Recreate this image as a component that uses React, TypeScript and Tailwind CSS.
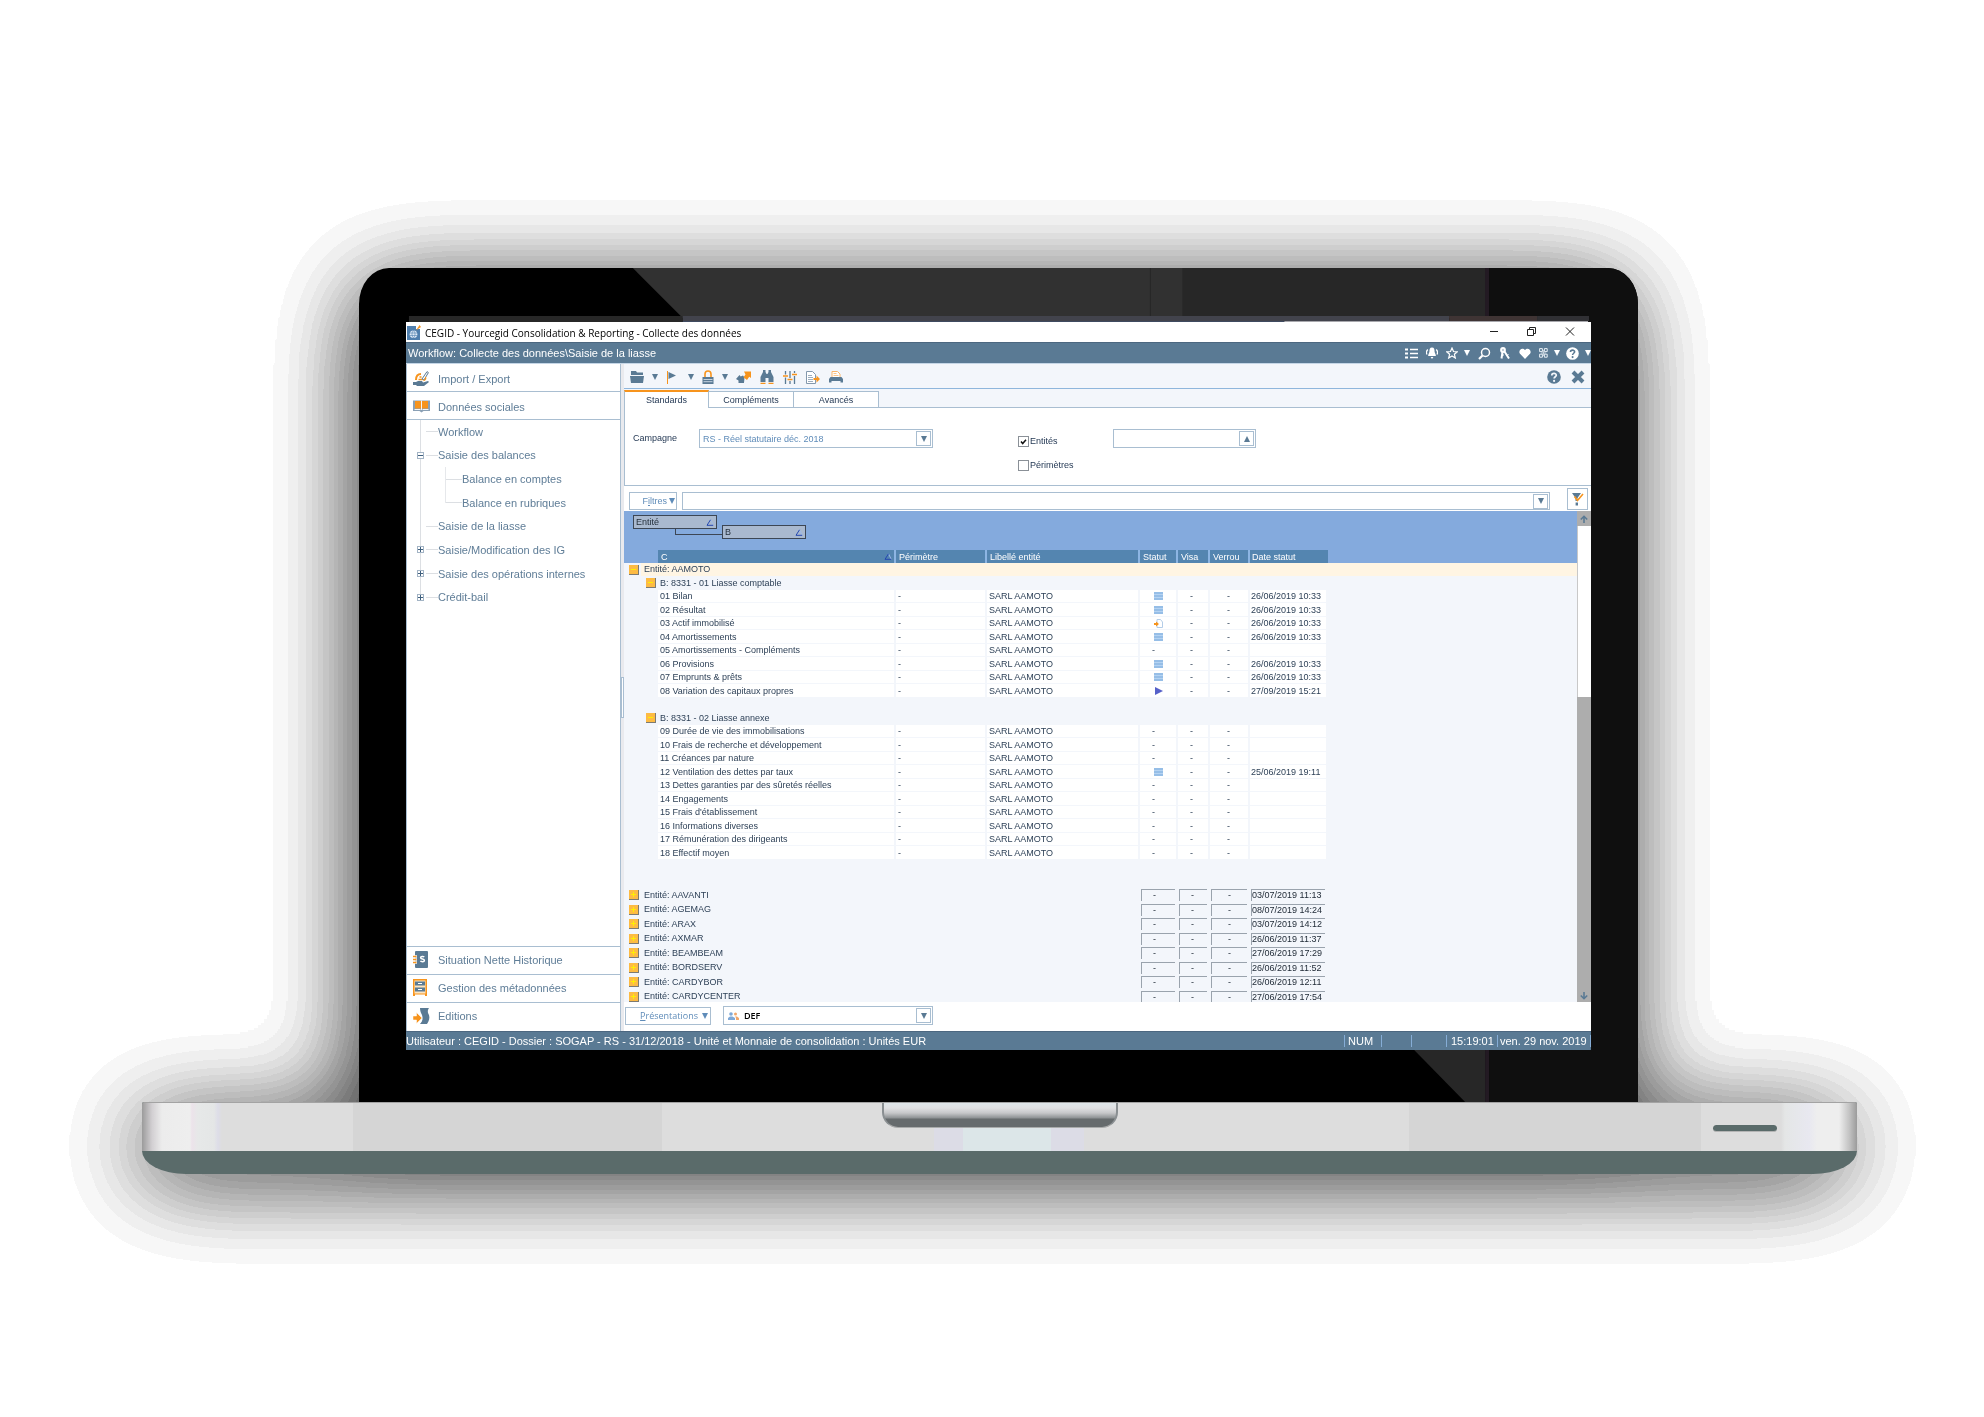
import React, { useState } from "react";
import clsx from "clsx";

type Statut = "list" | "import" | "play" | "none";

type Line = {
  label: string;
  statut: Statut;
  date?: string;
};

const LIASSE_COMPTABLE: Line[] = [
  { label: "01 Bilan", statut: "list", date: "26/06/2019 10:33" },
  { label: "02 Résultat", statut: "list", date: "26/06/2019 10:33" },
  { label: "03 Actif immobilisé", statut: "import", date: "26/06/2019 10:33" },
  { label: "04 Amortissements", statut: "list", date: "26/06/2019 10:33" },
  { label: "05 Amortissements - Compléments", statut: "none" },
  { label: "06 Provisions", statut: "list", date: "26/06/2019 10:33" },
  { label: "07 Emprunts & prêts", statut: "list", date: "26/06/2019 10:33" },
  {
    label: "08 Variation des capitaux propres",
    statut: "play",
    date: "27/09/2019 15:21",
  },
];

const LIASSE_ANNEXE: Line[] = [
  { label: "09 Durée de vie des immobilisations", statut: "none" },
  { label: "10 Frais de recherche et développement", statut: "none" },
  { label: "11 Créances par nature", statut: "none" },
  {
    label: "12 Ventilation des dettes par taux",
    statut: "list",
    date: "25/06/2019 19:11",
  },
  { label: "13 Dettes garanties par des sûretés réelles", statut: "none" },
  { label: "14 Engagements", statut: "none" },
  { label: "15 Frais d'établissement", statut: "none" },
  { label: "16 Informations diverses", statut: "none" },
  { label: "17 Rémunération des dirigeants", statut: "none" },
  { label: "18 Effectif moyen", statut: "none" },
];

const ENTITES = [
  { name: "AAVANTI", date: "03/07/2019 11:13" },
  { name: "AGEMAG", date: "08/07/2019 14:24" },
  { name: "ARAX", date: "03/07/2019 14:12" },
  { name: "AXMAR", date: "26/06/2019 11:37" },
  { name: "BEAMBEAM", date: "27/06/2019 17:29" },
  { name: "BORDSERV", date: "26/06/2019 11:52" },
  { name: "CARDYBOR", date: "26/06/2019 12:11" },
  { name: "CARDYCENTER", date: "27/06/2019 17:54" },
];

type TreeItem = {
  label: string;
  level: 0 | 1;
  state?: "open" | "closed";
  last?: boolean;
};

const TREE: TreeItem[] = [
  { label: "Workflow", level: 0 },
  { label: "Saisie des balances", level: 0, state: "open" },
  { label: "Balance en comptes", level: 1 },
  { label: "Balance en rubriques", level: 1, last: true },
  { label: "Saisie de la liasse", level: 0 },
  { label: "Saisie/Modification des IG", level: 0, state: "closed" },
  { label: "Saisie des opérations internes", level: 0, state: "closed" },
  { label: "Crédit-bail", level: 0, state: "closed", last: true },
];

const SLATE = "#5a7a94";
const ORANGE = "#f7941d";

/* ---------- icons ---------- */

function Caret({ up = false }: { up?: boolean }) {
  return (
    <svg viewBox="0 0 6 6" className="w-1.5 h-1.5 shrink-0" fill="currentColor">
      <path d={up ? "M0 6 3 0l3 6z" : "M0 0h6L3 6z"} />
    </svg>
  );
}

function SortMark() {
  return (
    <svg viewBox="0 0 8 7" className="w-2 h-[7px] shrink-0" fill="none">
      <path d="M4.500 .8 7.200 6.200" stroke="#9db9ea" />
      <path d="M7.200 6.300H1L4.500 .8" stroke="#2347b0" />
    </svg>
  );
}

function AppLogo() {
  return (
    <svg viewBox="0 0 14 15" className="w-3.5 h-[15px] ml-px">
      <path d="M0 1h9v3h4v11H0z" fill="#4f7fae" />
      <circle cx="6.500" cy="9.200" r="3.800" fill="#dfeaf6" />
      <path
        d="M3 8h7M3 10.500h7M6.500 5.500c-2 2-2 5.400 0 7.400M6.500 5.500c2 2 2 5.400 0 7.400"
        stroke="#4f7fae"
        strokeWidth=".6"
        fill="none"
      />
      <path d="M9 5.500 12.500 0 14 2z" fill={ORANGE} />
    </svg>
  );
}

function ImportExportIcon() {
  return (
    <svg viewBox="0 0 16 16" className="w-4 h-4" fill="none">
      <path d="M0 11h3l2-1h4l1 1.400L15 10l1 1-5 4H4l-1-1H0z" fill={SLATE} />
      <path d="M3 9c0-4 2-6 5-6" stroke={ORANGE} strokeWidth="2" />
      <path d="M5.500 8.500h4M6.500 6h2" stroke={ORANGE} strokeWidth="1.500" />
      <path d="M9 8 14 .6l1.400 1L11 9z" stroke={SLATE} fill="#fff" />
      <path d="M12.500 6c.6 1.500 0 3-2 3.500" stroke={ORANGE} strokeWidth="1.300" />
    </svg>
  );
}

function BookIcon() {
  return (
    <svg viewBox="0 0 17 13" className="w-[17px] h-[13px]">
      <path d="M0 .5h17v10.500h-6.500L8.500 12.500 6.500 11H0z" fill="#8aa0b5" />
      <path d="M2 1h6v7.500H2zM9 1h6v7.500H9z" fill={ORANGE} />
      <path d="M1.500 9.500h6M9.500 9.500h6M8.500 .5v9.500" stroke="#fff" strokeWidth=".9" />
    </svg>
  );
}

function LedgerIcon() {
  return (
    <svg viewBox="0 0 15 17" className="w-[15px] h-[17px]">
      <rect x="2" width="13" height="17" rx="1" fill={SLATE} />
      <path d="M0 5.500h4M0 8.500h4M0 11.500h4" stroke="#fff" strokeWidth="2.600" />
      <path d="M0 5.500h3.500M0 8.500h3.500M0 11.500h3.500" stroke={ORANGE} strokeWidth="1.400" />
      <path
        d="M11.200 6.200c-.6-.9-3.600-1-3.600.6 0 1.700 3.800.8 3.800 2.700 0 1.600-3.300 1.500-4 .4"
        stroke="#fff"
        strokeWidth="1.500"
        fill="none"
      />
    </svg>
  );
}

function CabinetIcon() {
  return (
    <svg viewBox="0 0 14 17" className="w-3.5 h-[17px]">
      <path d="M0 0h14v17h-2v-1.500H2V17H0z" fill={ORANGE} />
      <path d="M1.500 1.500h11v13h-11z" fill="#fbe3c0" />
      <path d="M2 2.500h10v4H2zM2 8.500h10v4H2z" fill={SLATE} />
      <path d="M5 4.500h4M5 10.500h4" stroke="#fff" strokeWidth="1.200" />
    </svg>
  );
}

function EditionsIcon() {
  return (
    <svg viewBox="0 0 17 16" className="w-[17px] h-4">
      <path
        d="M7 0h9c-2 3-1 5 0 7 1 3 0 6-2 9H7c3-3 3-6 2-9C8 5 7 3 7 0z"
        fill={SLATE}
      />
      <path d="M0 8h3.500V4.500L9 10l-5.500 5.500V12H0z" fill={ORANGE} stroke="#fff" strokeWidth=".5" />
    </svg>
  );
}

function FolderIcon() {
  return (
    <svg viewBox="0 0 14 12" className="w-3.5 h-3" fill={SLATE}>
      <path d="M1 0h5l1 1.500h6V4H1z" />
      <path d="M0 5h14l-1 7H1z" />
    </svg>
  );
}

function FlagIcon() {
  return (
    <svg viewBox="0 0 10 13" className="w-2.5 h-[13px]">
      <path d="M1.500 0v13" stroke={ORANGE} />
      <path d="M2.500 1l7.500 3.500L2.500 8z" fill={SLATE} />
    </svg>
  );
}

function LockIcon() {
  return (
    <svg viewBox="0 0 12 14" className="w-3 h-3.5">
      <path d="M3 7V4a3 3 0 0 1 6 0v3" stroke={ORANGE} strokeWidth="1.600" fill="none" />
      <rect x=".5" y="7" width="11" height="7" fill={SLATE} />
      <path d="M1.500 9.500h9M1.500 11.700h9" stroke="#dfe8f1" strokeWidth=".8" />
    </svg>
  );
}

function TransferIcon() {
  return (
    <svg viewBox="0 0 15 12" className="w-[15px] h-3">
      <path d="M0 8l3.500-4 1.200 1.500L7 4.500l1.500 2L8 12H2.500V9.500z" fill={SLATE} />
      <path d="M8 .5h7V7l-1.800-1.200L11 9 7.500 6.200 9.500 3.500z" fill={ORANGE} />
    </svg>
  );
}

function BinocularsIcon() {
  return (
    <svg viewBox="0 0 14 14" className="w-3.5 h-3.5">
      <path
        d="M3 0h2.500v2L6.500 4h1L8.500 2V0H11v2l2.500 5v5h-5V8h-3v4h-5V7L3 2z"
        fill={SLATE}
      />
      <path d="M.5 13.300h5M8.500 13.300h5" stroke={ORANGE} strokeWidth="1.300" />
    </svg>
  );
}

function SlidersIcon() {
  return (
    <svg viewBox="0 0 14 13" className="w-3.5 h-[13px]" fill="none">
      <path d="M2.500 0v13M7 0v13M11.500 0v13" stroke={SLATE} strokeWidth="1.300" />
      <path d="M0 5h5M4.500 8.500h5M9 3.500h5" stroke="#f3f6fb" strokeWidth="3.200" />
      <path d="M0 5h5M4.500 8.500h5M9 3.500h5" stroke={ORANGE} strokeWidth="1.500" />
    </svg>
  );
}

function DocArrowIcon() {
  return (
    <svg viewBox="0 0 14 13" className="w-3.5 h-[13px]" fill="none">
      <path d="M.5.5h6l3 3v9h-9z" stroke="#8398ad" fill="#fff" />
      <path d="M2 4.500h4M2 6.500h5M2 8.500h5M2 10.500h5" stroke="#8398ad" strokeWidth=".8" />
      <path d="M7.500 7h3V4.500L14 8l-3.500 3.500V9h-3z" fill={ORANGE} />
    </svg>
  );
}

function PrinterIcon() {
  return (
    <svg viewBox="0 0 14 12" className="w-3.5 h-3">
      <path d="M3 6V.5h5.500L11 3v3" stroke="#f9b56b" fill="#fff" />
      <path d="M4.500 2.500h3M4.500 4.500h5" stroke="#f9b56b" strokeWidth=".8" />
      <path d="M1.500 6h11L14 8v3.500h-2.500V10h-9v1.500H0V8z" fill={SLATE} />
    </svg>
  );
}

function HelpIcon({ mark, className }: { mark: string; className: string }) {
  return (
    <svg viewBox="0 0 14 14" className={className}>
      <circle cx="7" cy="7" r="6.800" fill="currentColor" />
      <path
        d="M4.800 5.400C4.800 2.700 9.300 2.800 9.300 5.200 9.300 6.700 7.100 6.800 7.100 8.600"
        stroke={mark}
        strokeWidth="1.700"
        fill="none"
      />
      <circle cx="7.100" cy="10.900" r="1.100" fill={mark} />
    </svg>
  );
}

function FilterIcon() {
  return (
    <svg viewBox="0 0 12 13" className="w-3 h-[13px]" fill="none">
      <path d="M0 0h9L5.500 5v3h-2V5z" fill={SLATE} />
      <path d="M2.500 3.500 5.500 7.500 11 1" stroke={ORANGE} strokeWidth="1.600" />
      <path d="M4.800 9.500v3" stroke={SLATE} strokeWidth="2.400" />
    </svg>
  );
}

function PeopleIcon() {
  return (
    <svg viewBox="0 0 11 8" className="w-[11px] h-2">
      <circle cx="3" cy="2" r="1.800" fill="#7fa9d8" />
      <path d="M0 8V6l2-1.500h2.500L7 6v2z" fill="#7fa9d8" />
      <circle cx="7.500" cy="2" r="1.500" fill="#f2a76a" />
      <path d="M7 4.500h2L11 6v2H8V6z" fill="#f2a76a" />
    </svg>
  );
}

function StatutMark({ statut }: { statut: Statut }) {
  if (statut === "list") {
    return (
      <svg viewBox="0 0 9 8" className="w-[9px] h-2 ml-[14px]">
        <path d="M0 0h9v8H0z" fill="#b5d3f2" />
        <path d="M0 1h9M0 4h9M0 7h9" stroke="#79a9dc" strokeWidth="1.200" />
      </svg>
    );
  }
  if (statut === "import") {
    return (
      <svg viewBox="0 0 9 9" className="w-[9px] h-[9px] ml-[14px]">
        <path d="M3 .5h3.500L8.500 3v5.500H3z" fill="#fff" stroke="#b4cde8" />
        <path d="M0 4h2V2.500L5 5 2 7.500V6H0z" fill={ORANGE} />
      </svg>
    );
  }
  if (statut === "play") {
    return (
      <svg viewBox="0 0 8 8" className="w-2 h-2 ml-[15px]">
        <path d="M0 0 8 4 0 8z" fill="#5661c9" />
      </svg>
    );
  }
  return <span className="pl-3">-</span>;
}

function Toggle({ open = false }: { open?: boolean }) {
  return (
    <button
      type="button"
      aria-label={open ? "Replier" : "Déplier"}
      className="flex items-center justify-center w-2.5 h-2.5 shrink-0 bg-[#fdbb44] border-r border-b border-[#7d7a72]"
    >
      <svg viewBox="0 0 5 5" className="w-[5px] h-[5px]" stroke="#fff000">
        <path d={open ? "M0 2.500h5" : "M0 2.500h5M2.500 0v5"} />
      </svg>
    </button>
  );
}

/* ---------- window chrome ---------- */

function TitleBar() {
  return (
    <header className="flex items-center h-5 bg-white text-black">
      <AppLogo />
      <h1 className="ml-1 pt-px text-[10px] leading-4 font-['Open_Sans','Noto_Sans',sans-serif] whitespace-nowrap">
        CEGID - Yourcegid Consolidation &amp; Reporting - Collecte des données
      </h1>
      <div className="ml-auto flex items-center gap-7 pr-4">
        <button type="button" aria-label="Réduire">
          <svg viewBox="0 0 10 10" className="w-2.5 h-2.5" stroke="#222">
            <path d="M1 4.500h8" />
          </svg>
        </button>
        <button type="button" aria-label="Restaurer">
          <svg viewBox="0 0 10 10" className="w-2.5 h-2.5" stroke="#222" fill="none">
            <path d="M.5 2.500h6v6h-6zM2.500 2.500v-2h6v6h-2" />
          </svg>
        </button>
        <button type="button" aria-label="Fermer">
          <svg viewBox="0 0 10 10" className="w-2.5 h-2.5" stroke="#222">
            <path d="M1 .5l8 8M9 .5l-8 8" />
          </svg>
        </button>
      </div>
    </header>
  );
}

function PathBar() {
  return (
    <div className="flex items-center h-[22px] pl-0.5 bg-[#5a7a94] border-t border-b border-t-[#4c6780] border-b-[#c5d6e6] text-white">
      <span className="text-[11px] leading-4 whitespace-nowrap">
        Workflow: Collecte des données\Saisie de la liasse
      </span>
      <div className="ml-auto flex items-center">
        <button type="button" aria-label="Liste" className="mr-2">
          <svg viewBox="0 0 13 11" className="w-[13px] h-[11px]" stroke="#fff">
            <path d="M0 1.500h3M0 5.500h3M0 9.500h3" strokeWidth="2.200" />
            <path d="M5 1.500h8M5 5.500h8M5 9.500h8" strokeWidth="1.400" />
          </svg>
        </button>
        <button type="button" aria-label="Alertes" className="mr-2">
          <svg viewBox="0 0 12 12" className="w-3 h-3" fill="#fff">
            <path d="M6 .5c2.300 0 2.600 2 2.600 4.500L9.800 8v1H2.200V8l1.200-3C3.400 2.500 3.700.5 6 .5zM4.600 10h2.800L6 12z" />
            <path d="M1.800 2.500C.3 4 .2 6 1 7.500M10.200 2.500c1.500 1.500 1.600 3.500.8 5" stroke="#fff" strokeWidth="1.300" fill="none" />
          </svg>
        </button>
        <button type="button" aria-label="Favoris" className="flex items-center gap-1.5 mr-2">
          <svg viewBox="0 0 12 12" className="w-3 h-3" stroke="#fff" strokeWidth="1.200" fill="none">
            <path d="M6 1l1.500 3.500 3.700.3-2.800 2.500.9 3.700L6 9l-3.300 2 .9-3.700L.8 4.800l3.700-.3z" />
          </svg>
          <Caret />
        </button>
        <button type="button" aria-label="Rechercher" className="mr-2">
          <svg viewBox="0 0 13 13" className="w-[13px] h-[13px]" stroke="#fff" fill="none">
            <circle cx="7.500" cy="5.500" r="4" strokeWidth="1.500" />
            <path d="M4.500 8.500 1 12" strokeWidth="2.200" />
          </svg>
        </button>
        <button type="button" aria-label="Droits" className="mr-2">
          <svg viewBox="0 0 12 12" className="w-3 h-3" stroke="#fff" fill="none">
            <circle cx="4" cy="3" r="1.800" strokeWidth="2.200" />
            <path d="M3.500 5 2.500 11.500M5.500 4.500 10 11.500" strokeWidth="2" />
            <path d="M3.500 8H5M8 8.500 9.500 7.500" />
          </svg>
        </button>
        <button type="button" aria-label="Préférés" className="mr-2">
          <svg viewBox="0 0 12 11" className="w-3 h-[11px]" fill="#fff">
            <path d="M6 11 .8 5.500C-1 2.500 3-1.500 6 2c3-3.500 7 .5 5.200 3.500z" />
          </svg>
        </button>
        <button type="button" aria-label="Modules" className="flex items-center gap-1.5 mr-1.5">
          <svg viewBox="0 0 9 10" className="w-[9px] h-2.5" stroke="#e8eff5" fill="none">
            <path d="M.6.6h2.800v3H.6zM5.400.6h2.800v3H5.400zM.6 6.200h2.800v3H.6zM5.400 6.200h2.800v3H5.400z" />
            <path d="M4.400 2v6M2 5h5" strokeWidth=".7" />
          </svg>
          <Caret />
        </button>
        <button type="button" aria-label="Aide" className="flex items-center gap-1.5">
          <HelpIcon mark={SLATE} className="w-[13px] h-[13px]" />
          <Caret />
        </button>
      </div>
    </div>
  );
}

/* ---------- sidebar ---------- */

function SidebarLink({
  icon,
  label,
  top = false,
}: {
  icon: React.ReactNode;
  label: string;
  top?: boolean;
}) {
  return (
    <a
      href="#"
      className={clsx(
        "flex items-center h-7 pl-1.5 border-[#a9bed1]",
        top ? "border-b pt-0.5" : "border-t pb-0.5"
      )}
    >
      <span className="flex items-center justify-start w-[25px]">{icon}</span>
      {label}
    </a>
  );
}

function TreeRow({ item }: { item: TreeItem }) {
  const root = item.level === 0;
  return (
    <li className="flex items-stretch pl-2">
      <span className="relative flex w-[11px] items-center justify-center">
        <span
          className={clsx(
            "absolute left-[5px] top-0 w-px bg-[#dcdfe3]",
            item.last && root ? "h-1/2" : "h-full"
          )}
        />
        {item.state && (
          <button
            type="button"
            aria-label={item.state === "open" ? "Replier" : "Déplier"}
            className="relative bg-white border border-[#a3b4c5] w-[7px] h-[7px]"
          >
            <svg viewBox="0 0 5 5" className="w-[5px] h-[5px]" stroke="#3f5f7d">
              <path d={item.state === "open" ? "M0 2.500h5" : "M0 2.500h5M2.500 0v5"} />
            </svg>
          </button>
        )}
      </span>
      {!root && (
        <span className="flex w-5">
          <span
            className={clsx(
              "ml-auto w-px bg-[#e6e8eb]",
              item.last ? "h-1/2" : "h-full"
            )}
          />
        </span>
      )}
      <span
        className={clsx("self-center h-px bg-[#dcdfe3]", root ? "w-3" : "w-4")}
      />
      <a href="#" className="self-center whitespace-nowrap">
        {item.label}
      </a>
    </li>
  );
}

function Sidebar() {
  return (
    <nav className="flex flex-col w-[215px] shrink-0 bg-white border-x border-[#a9bed1] text-[11px] leading-4 text-[#5f7d97]">
      <SidebarLink top icon={<ImportExportIcon />} label="Import / Export" />
      <SidebarLink top icon={<BookIcon />} label="Données sociales" />
      <ul className="grid auto-rows-fr h-[189px]">
        {TREE.map((item) => (
          <TreeRow key={item.label} item={item} />
        ))}
      </ul>
      <div className="mt-auto pb-px">
        <SidebarLink icon={<LedgerIcon />} label="Situation Nette Historique" />
        <SidebarLink icon={<CabinetIcon />} label="Gestion des métadonnées" />
        <SidebarLink icon={<EditionsIcon />} label="Editions" />
      </div>
    </nav>
  );
}

/* ---------- main area ---------- */

function Toolbar() {
  return (
    <div className="flex items-center h-[25px] pt-0.5 pl-1.5 pr-1.5 bg-[#f3f6fb] border-b border-[#8fb6dc] text-[#5a7a94]">
      <button type="button" aria-label="Ouvrir" className="flex items-center gap-2 mr-2">
        <FolderIcon />
        <Caret />
      </button>
      <button type="button" aria-label="Statut" className="flex items-center gap-3 mr-2">
        <FlagIcon />
        <Caret />
      </button>
      <button type="button" aria-label="Verrou" className="flex items-center gap-2 mr-2">
        <LockIcon />
        <Caret />
      </button>
      <div className="flex items-center gap-[9px]">
        <button type="button" aria-label="Transférer">
          <TransferIcon />
        </button>
        <button type="button" aria-label="Rechercher">
          <BinocularsIcon />
        </button>
        <button type="button" aria-label="Paramètres">
          <SlidersIcon />
        </button>
        <button type="button" aria-label="Exporter">
          <DocArrowIcon />
        </button>
        <button type="button" aria-label="Imprimer">
          <PrinterIcon />
        </button>
      </div>
      <button type="button" aria-label="Aide" className="ml-auto mr-2.5">
        <HelpIcon mark="#f3f6fb" className="w-3.5 h-3.5" />
      </button>
      <button type="button" aria-label="Fermer">
        <svg viewBox="0 0 14 14" className="w-3.5 h-3.5" stroke={SLATE}>
          <path d="M2 2l10 10M12 2 2 12" strokeWidth="4" />
        </svg>
      </button>
    </div>
  );
}

const TABS = ["Standards", "Compléments", "Avancés"];

function Tabs() {
  const [active, setActive] = useState(TABS[0]);
  return (
    <div role="tablist" className="flex items-end h-[19px] bg-[#f3f6fb] border-b border-[#a9bed1]">
      {TABS.map((tab) => (
        <button
          key={tab}
          role="tab"
          type="button"
          aria-selected={tab === active}
          onClick={() => setActive(tab)}
          className={clsx(
            "w-[85px] bg-white border-r text-center",
            tab === active
              ? "h-[18px] -mb-px border-l border-t-2 border-t-[#f7941d] border-x-[#a9bed1]"
              : "h-4 border-t border-[#a9bed1]"
          )}
        >
          {tab}
        </button>
      ))}
    </div>
  );
}

function ArrowBox({ up = false, label }: { up?: boolean; label: string }) {
  return (
    <button
      type="button"
      aria-label={label}
      className="flex items-center justify-center w-[15px] h-[15px] shrink-0 border border-[#a9bed1] bg-white text-[#5a7a94]"
    >
      <Caret up={up} />
    </button>
  );
}

function Check({
  id,
  label,
  defaultChecked = false,
}: {
  id: string;
  label: string;
  defaultChecked?: boolean;
}) {
  return (
    <div className="flex items-center h-3">
      <span className="relative flex">
        <input
          id={id}
          type="checkbox"
          defaultChecked={defaultChecked}
          className="peer appearance-none w-[11px] h-[11px] bg-white border border-[#8a9097]"
        />
        <svg
          viewBox="0 0 11 11"
          className="absolute inset-0 w-[11px] h-[11px] pointer-events-none hidden peer-checked:block"
          fill="none"
        >
          <path d="M3 5.500 4.700 7.500 8 3.800" stroke="#111" strokeWidth="1.500" />
        </svg>
      </span>
      <label htmlFor={id} className="ml-px">
        {label}
      </label>
    </div>
  );
}

function Criteria() {
  return (
    <section className="flex items-start h-[78px] pl-2 pt-[21px] bg-white border-l border-b border-[#a9bed1]">
      <label htmlFor="campagne" className="w-[66px] leading-[18px]">
        Campagne
      </label>
      <div className="flex items-center w-[234px] h-[19px] pr-px border border-[#a9bed1]">
        <select
          id="campagne"
          className="appearance-none flex-1 pl-[3px] bg-transparent text-[#5f8cb9]"
        >
          <option>RS - Réel statutaire déc. 2018</option>
        </select>
        <ArrowBox label="Choisir une campagne" />
      </div>
      <div className="flex flex-col gap-3 ml-[85px] pt-1.5 w-[95px]">
        <Check id="entites" label="Entités" defaultChecked />
        <Check id="perimetres" label="Périmètres" />
      </div>
      <div className="flex items-center w-[143px] h-[19px] pr-px border border-[#a9bed1]">
        <input aria-label="Entité" className="flex-1 min-w-0 px-1 outline-none" />
        <ArrowBox up label="Choisir une entité" />
      </div>
    </section>
  );
}

function FilterBar() {
  return (
    <div className="flex items-end h-[25px] pl-[5px] pr-[3px] bg-white">
      <button
        type="button"
        className="flex items-center justify-end gap-0.5 w-12 h-[18px] mb-px pr-px border border-[#a9bed1] text-[#5f8cb9]"
      >
        <span>
          F<u>i</u>ltres
        </span>
        <Caret />
      </button>
      <div className="flex items-center flex-1 h-[18px] mb-px ml-[5px] mr-[17px] pr-px border border-[#a9bed1]">
        <input aria-label="Filtre" className="flex-1 px-1 outline-none" />
        <ArrowBox label="Choisir un filtre" />
      </div>
      <button
        type="button"
        aria-label="Appliquer le filtre"
        className="flex items-center justify-center w-[21px] h-[22px] mb-px border border-[#a9bed1]"
      >
        <FilterIcon />
      </button>
    </div>
  );
}

function GroupPill({ label, className }: { label: string; className?: string }) {
  return (
    <button
      type="button"
      className={clsx(
        "flex items-center justify-between w-[84px] h-[14px] px-0.5 bg-[#a9b9cf] border border-[#3c4654]",
        className
      )}
    >
      {label}
      <SortMark />
    </button>
  );
}

const HEAD = "p-0 pl-[3px] text-left font-normal bg-[#5485b0] border-r-2 border-[#8db5e3]";
const CELL = "p-0 bg-white border-b border-r-2 border-[#f3f6fb]";

function GroupRow({
  label,
  nested = false,
  open = false,
}: {
  label: string;
  nested?: boolean;
  open?: boolean;
}) {
  return (
    <td colSpan={open ? 9 : 4} className="p-0">
      <div className={clsx("flex items-center", nested ? "pl-[22px]" : "pl-[5px]")}>
        <Toggle open={open} />
        <span
          className={clsx(
            "ml-0.5 leading-[13px]",
            nested ? "pl-0.5" : "pl-[3px]",
            open && !nested && "flex-1 bg-[#fff5e3]"
          )}
        >
          {label}
        </span>
      </div>
    </td>
  );
}

function LineRow({ line }: { line: Line }) {
  return (
    <tr className="h-[13px] even:h-[14px]">
      <td className="p-0" />
      <td className={clsx(CELL, "pl-0.5")}>{line.label}</td>
      <td className={clsx(CELL, "pl-0.5")}>-</td>
      <td className={clsx(CELL, "pl-0.5")}>SARL AAMOTO</td>
      <td className={CELL}>
        <StatutMark statut={line.statut} />
      </td>
      <td className={clsx(CELL, "pl-3")}>-</td>
      <td className={clsx(CELL, "pl-[17px]")}>-</td>
      <td className={clsx(CELL, "pl-px")}>{line.date}</td>
      <td className="p-0" />
    </tr>
  );
}

function Sunken({ children, className }: { children: React.ReactNode; className?: string }) {
  return (
    <td className="p-0 pl-px pr-[3px]">
      <div
        className={clsx(
          "h-3 leading-[11px] border-t border-l border-[#9aa3ad] text-[#1c2733]",
          className
        )}
      >
        {children}
      </div>
    </td>
  );
}

function LiasseTable() {
  return (
    <table className="w-full table-fixed border-separate border-spacing-0 leading-3 whitespace-nowrap text-[#2f4258]">
      <colgroup>
        <col className="w-[34px]" />
        <col className="w-[238px]" />
        <col className="w-[91px]" />
        <col className="w-[153px]" />
        <col className="w-[38px]" />
        <col className="w-8" />
        <col className="w-10" />
        <col className="w-[78px]" />
        <col />
      </colgroup>
      <thead className="bg-[#84aadd] text-white">
        <tr className="h-[13px]">
          <td className="p-0" />
          <th className={HEAD}>
            <div className="flex items-center justify-between pr-0.5">
              C
              <SortMark />
            </div>
          </th>
          <th className={HEAD}>Périmètre</th>
          <th className={HEAD}>Libellé entité</th>
          <th className={HEAD}>Statut</th>
          <th className={HEAD}>Visa</th>
          <th className={HEAD}>Verrou</th>
          <th className="p-0 pl-0.5 text-left font-normal bg-[#5485b0]">Date statut</th>
          <td className="p-0" />
        </tr>
      </thead>
      <tbody>
        <tr className="h-[13px] even:h-[14px]">
          <GroupRow label="Entité: AAMOTO" open />
        </tr>
        <tr className="h-[13px] even:h-[14px]">
          <GroupRow label="B: 8331 - 01 Liasse comptable" nested open />
        </tr>
        {LIASSE_COMPTABLE.map((line) => (
          <LineRow key={line.label} line={line} />
        ))}
        <tr className="h-[13px] even:h-[14px]">
          <td colSpan={9} className="p-0" />
        </tr>
        <tr className="h-[13px] even:h-[14px]">
          <GroupRow label="B: 8331 - 02 Liasse annexe" nested open />
        </tr>
        {LIASSE_ANNEXE.map((line) => (
          <LineRow key={line.label} line={line} />
        ))}
      </tbody>
      <tbody>
        <tr className="h-7">
          <td colSpan={9} className="p-0" />
        </tr>
      </tbody>
      <tbody>
        {ENTITES.map((entite) => (
          <tr key={entite.name} className="h-[14px] even:h-[15px]">
            <GroupRow label={`Entité: ${entite.name}`} />
            <Sunken className="pl-[11px]">-</Sunken>
            <Sunken className="pl-[11px]">-</Sunken>
            <Sunken className="pl-4">-</Sunken>
            <Sunken>{entite.date}</Sunken>
            <td className="p-0" />
          </tr>
        ))}
      </tbody>
    </table>
  );
}

function ScrollRail() {
  return (
    <div className="flex flex-col w-3.5 shrink-0 bg-[#adadad] text-[#5a7a94]">
      <button type="button" aria-label="Monter" className="flex justify-center items-center h-[15px]">
        <svg viewBox="0 0 8 8" className="w-2 h-2" stroke="currentColor" fill="none">
          <path d="M4 8V1.500M.8 4.500 4 1.300l3.200 3.200" strokeWidth="1.600" />
        </svg>
      </button>
      <div className="h-[171px] bg-white border-l border-[#c8c8c8]" />
      <button
        type="button"
        aria-label="Descendre"
        className="mt-auto flex justify-center items-center h-3"
      >
        <svg viewBox="0 0 8 8" className="w-2 h-2" stroke="currentColor" fill="none">
          <path d="M4 0v6.500M.8 3.500 4 6.700l3.200-3.200" strokeWidth="1.600" />
        </svg>
      </button>
    </div>
  );
}

function Grid() {
  return (
    <div className="flex h-[491px] overflow-hidden">
      <div className="flex-1 min-w-0 bg-[#f3f6fb]">
        <div className="relative flex items-start h-[39px] pl-[9px] pt-1 bg-[#84aadd] text-[#26313d]">
          <GroupPill label="Entité" />
          <span className="absolute left-[51px] top-[18px] w-[47px] h-1.5 border-l border-b border-[#3c4654]" />
          <GroupPill label="B" className="ml-[5px] mt-2.5" />
        </div>
        <LiasseTable />
      </div>
      <ScrollRail />
    </div>
  );
}

function PresentationBar() {
  return (
    <div className="flex items-start h-[29px] pl-px pt-1 bg-white">
      <button
        type="button"
        className="flex items-center justify-end gap-1 w-[86px] h-[18px] mt-px pr-0.5 border border-[#a9bed1] text-[#5f8cb9] font-['Open_Sans','Noto_Sans',sans-serif]"
      >
        <span>
          <u>P</u>résentations
        </span>
        <Caret />
      </button>
      <div className="flex items-center w-[210px] h-[19px] ml-3 pl-1 pr-px border border-[#a9bed1]">
        <PeopleIcon />
        <select
          aria-label="Présentation"
          className="appearance-none flex-1 pl-[5px] text-black font-semibold font-['Open_Sans','Noto_Sans',sans-serif]"
        >
          <option>DEF</option>
        </select>
        <ArrowBox label="Choisir une présentation" />
      </div>
    </div>
  );
}

function StatusBar() {
  return (
    <footer className="flex items-center h-[19px] bg-[#5a7a94] border-t border-[#4c6780] text-white text-[11px] leading-4 whitespace-nowrap">
      <span>
        Utilisateur : CEGID - Dossier : SOGAP - RS - 31/12/2018 - Unité et
        Monnaie de consolidation : Unités EUR
      </span>
      <span className="ml-auto w-[37px] h-3 leading-3 pl-[3px] border-l border-[#86add6]">NUM</span>
      <span className="w-[30px] h-3 border-l border-[#86add6]" />
      <span className="w-[35px] h-3 border-l border-[#86add6]" />
      <span className="w-[51px] h-3 leading-3 pl-1 border-l border-[#86add6]">15:19:01</span>
      <span className="w-[94px] h-3 leading-3 pl-0.5 border-x border-[#86add6]">
        ven. 29 nov. 2019
      </span>
    </footer>
  );
}

function Screen() {
  return (
    <div className="relative bg-white font-['Liberation_Sans',Arial,sans-serif]">
      <TitleBar />
      <PathBar />
      <div className="flex">
        <Sidebar />
        <div className="flex flex-col justify-center w-[3px] shrink-0 bg-[#e9eaee]">
          <span className="h-[41px] border border-[#a9bed1] bg-white" />
        </div>
        <main className="flex-1 min-w-0 text-[9px] leading-3 text-[#1f3450]">
          <Toolbar />
          <Tabs />
          <Criteria />
          <FilterBar />
          <Grid />
          <PresentationBar />
        </main>
      </div>
      <StatusBar />
    </div>
  );
}

/* ---------- laptop ---------- */

// Light falling on the glass around the screen
function Glare() {
  return (
    <svg
      viewBox="0 0 1280 834"
      preserveAspectRatio="none"
      className="absolute inset-0 w-full h-full"
      aria-hidden="true"
    >
      <path d="M274 0h856v50H324z" fill="#313131" />
      <path d="M824 0h305v50H824z" fill="#272727" />
      <path d="M792 0v50" stroke="#262626" />
      <path d="M1131 0h149v834h-149z" fill="#0f0f0f" />
      <path d="M1127 0h4v50h-4zM1127 780h4v54h-4z" fill="#231a23" />
      <path d="M1056 782h71v52h-20z" fill="#272727" />
      <path d="M50 48h274v6H50z" fill="#272727" />
      <path d="M324 48h767v5H324z" fill="#42434c" />
      <path d="M1091 48h88v5h-88z" fill="#3f3434" />
      <path d="M1179 48h52v5h-52z" fill="#303034" />
      <path d="M324 53.500h602" stroke="#3f4a60" />
      <path d="M926 53.500h304" stroke="#a9a9ae" />
    </svg>
  );
}

function Base() {
  return (
    <div className="overflow-hidden bg-[#5a6b6a] [border-radius:2px_2px_44px_44px/2px_2px_23px_23px] pb-[23px]">
      <div className="grid grid-cols-[1fr_236px_1fr] items-start h-[49px] border-t border-[#a3a3a3] bg-[linear-gradient(90deg,#9b9b9b_0,#d2cfd2_10px,#ececec_20px,#eeeeee_48px,#ece3ea_50px,#e6e8e8_56px,#e4e6e6_72px,#dddde8_76px,#dddddd_80px,#dddddd_12.300%,#d5d5d5_12.300%,#d5d5d5_30.300%,#dddddd_30.300%,#dddddd_46.200%,#dcdce6_46.200%,#dcdce6_47.900%,#dce6e8_47.900%,#dce6e8_53%,#dcdce6_53%,#dcdce6_54.900%,#dddddd_54.900%,#dddddd_73.900%,#d5d5d5_73.900%,#d5d5d5_90.900%,#dddddd_90.900%,#dddddd_calc(100%-76px),#e4e6e6_calc(100%-72px),#e8e8f0_calc(100%-48px),#eeeeee_calc(100%-40px),#eeeeee_calc(100%-18px),#c4c4c4_calc(100%-8px),#9b9b9b_100%)]">
        <span />
        <span className="h-[25px] rounded-b-2xl border-x-2 border-b border-x-[#8a8f92] border-b-[#a9abab] bg-[linear-gradient(180deg,#dfe6e9_0,#e0e0e2_5px,#c6c7c9_10px,#8d9193_15px,#666b6d_16px,#666b6d_100%)]" />
        <span className="justify-self-end w-16 h-[7px] mt-[22px] mr-20 rounded-sm bg-[#5a6b6a] border-b border-[#b5b5b5]" />
      </div>
    </div>
  );
}

// Stepped drop shadow: the blurred outline is cut into even tone bands
function ShadowFilter() {
  return (
    <svg className="absolute w-0 h-0" aria-hidden="true">
      <filter
        id="laptop-shadow"
        x="-10%"
        y="-20%"
        width="120%"
        height="140%"
        colorInterpolationFilters="sRGB"
      >
        <feGaussianBlur in="SourceAlpha" stdDeviation="47" />
        <feOffset dx="-7" dy="11" />
        <feComponentTransfer result="shadow">
          <feFuncA
            type="discrete"
            tableValues="0 .033 .065 .098 .13 .163 .195 .228 .26 .293 .325 .358 .39 .423 .455 .488 .52 .553 .585 .618 .65 .683 .715 .748 .78 .8"
          />
        </feComponentTransfer>
        <feMerge>
          <feMergeNode in="shadow" />
          <feMergeNode in="SourceGraphic" />
        </feMerge>
      </filter>
    </svg>
  );
}

export default function App() {
  return (
    <div className="relative bg-white pl-[142px] pr-[127px] pt-[268px] pb-[243px]">
      <ShadowFilter />
      <div className="[filter:url(#laptop-shadow)]">
        <div className="relative ml-[217px] mr-[219px] px-[47px] pt-[54px] pb-[52px] overflow-hidden bg-black [border-radius:30px_30px_0_0/36px_36px_0_0]">
          <Glare />
          <Screen />
        </div>
        <Base />
      </div>
    </div>
  );
}
